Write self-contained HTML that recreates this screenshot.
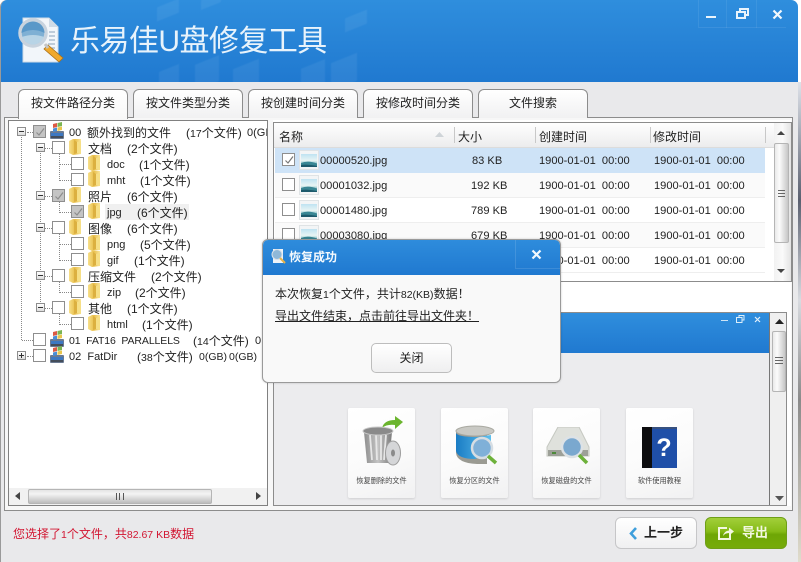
<!DOCTYPE html>
<html><head><meta charset="utf-8"><style>
html,body{margin:0;padding:0;width:801px;height:562px;overflow:hidden;background:#fff}
*{box-sizing:border-box}
body{font-family:"Liberation Sans","Noto Sans CJK SC",sans-serif;font-size:12px;color:#222;position:relative}
div,span,svg{position:absolute}
span{white-space:nowrap;line-height:16px}
i{font-style:normal;font-size:10.5px}
.t{font-size:11px}
#win{left:0;top:0;width:798px;height:562px;background:#e9e9eb;border-left:1px solid #9a9a9a;border-radius:7px 7px 0 0;overflow:hidden}
#edge{left:798px;top:0;width:3px;height:562px;background:linear-gradient(#fff 0,#fff 82px,#dfe3ea 82px,#5a6070 200px,#d8dbe0 300px,#8a8a8a 400px,#e0dccc 562px)}
#hd{left:0;top:0;width:798px;height:82px;background:linear-gradient(#2f8edd,#2079d0);overflow:hidden}
.sq{background:rgba(255,255,255,.06);transform:skewY(-22deg);filter:blur(.6px)}
#ctl{left:697px;top:0;width:88px;height:28px;border-left:1px solid rgba(255,255,255,.07);border-bottom:1px solid rgba(255,255,255,.08)}
.tab{top:89px;height:29px;width:110px;border:1px solid #8c8c8c;border-bottom:0;border-radius:6px 6px 0 0;background:linear-gradient(#fff,#f1f1f2);text-align:center;line-height:27px;color:#222}
#main{left:3px;top:117px;width:789px;height:394px;border:1px solid #8c8c8c;background:#f7f7f7}
#tree{left:8px;top:120px;width:260px;height:386px;border:1px solid #808080;background:#fff;overflow:hidden;z-index:1}
.r{left:0;width:268px;height:16px}
.r>span{top:1px}
.c{width:13px;height:13px;border:1px solid #8e8e8e;background:#fff;top:1px}
.c.k{background:#c4c4c4}
.e{width:9px;height:9px;border:1px solid #8d8d8d;background:linear-gradient(#fff,#ddd);top:3px}
.e:before{content:"";position:absolute;left:1px;top:3px;width:5px;height:1px;background:#333}
.e.p:after{content:"";position:absolute;left:3px;top:1px;width:1px;height:5px;background:#333}
.v{border-left:1px dotted #888;width:1px}
.h{border-top:1px dotted #888;height:1px}
#pane{left:273px;top:120px;width:518px;height:386px;background:#fff}
#list{left:273px;top:122px;width:519px;height:160px;border:1px solid #8c8c8c;background:#fff;overflow:hidden}
#lh{left:0;top:0;width:500px;height:25px;background:linear-gradient(#fff,#ececed);border-bottom:1px solid #dcdcdc}
.lr{left:1px;width:490px;height:25px;border-bottom:1px solid #eee;background:#fff}
.lr span{top:5px;font-size:11.1px}
.sb{background:linear-gradient(90deg,#f2f2f2,#fafafa,#e3e3e3)}
.th{background:linear-gradient(90deg,#e9e9e9,#fbfbfb 35%,#c6c6c6);border:1px solid #b5b5b5;border-radius:2px}
#pv{left:273px;top:312px;width:514px;height:194px;background:#ececee;border:1px solid #8c8c8c;overflow:hidden}
.card{top:95px;width:67px;height:90px;background:linear-gradient(160deg,#fff,#fbfbfb 55%,#f1f1f2);border-radius:2px;box-shadow:0 1px 2px rgba(0,0,0,.12)}
.card span{left:0;width:67px;text-align:center;top:65px;font-size:7.2px;color:#444}
#dlg{left:262px;top:239px;width:299px;height:144px;background:#f9f9f9;border:1px solid #9a9a9a;border-radius:6px;overflow:hidden;box-shadow:0 0 2px rgba(0,0,0,.2);z-index:5}
#dh{left:0;top:0;width:299px;height:35px;background:linear-gradient(#2e8cdc,#2079d0)}
#bt{left:108px;top:103px;width:81px;height:30px;border:1px solid #bdbdbd;border-radius:5px;background:linear-gradient(#fff,#efeff0);text-align:center;line-height:28px;font-size:12px}
#prev{left:615px;top:517px;width:82px;height:32px;border:1px solid #c6c6c8;border-radius:6px;background:linear-gradient(#fff,#f0f0f1)}
#exp{left:705px;top:517px;width:82px;height:32px;border:1px solid #6f9f18;border-radius:6px;background:linear-gradient(#a2cf3a,#86bb17 45%,#6ea605 55%,#76ab0a)}
</style></head><body>
<svg width="0" height="0" style="left:0;top:0"><defs>
<linearGradient id="fg" x1="0" x2="1" y1="0" y2="0"><stop offset="0" stop-color="#f7e08a"/><stop offset=".5" stop-color="#e9bf4d"/><stop offset="1" stop-color="#f9e69c"/></linearGradient>
<symbol id="fo" viewBox="0 0 14 18"><path d="M1 3 L5 1 L13 1 L13 16 L5 17 L1 15Z" fill="url(#fg)"/><path d="M6 2 L6 16 L9 15 L9 4Z" fill="#dcb040"/><path d="M9 4 L13 3 L13 16 L9 15Z" fill="#f6df86"/></symbol>
<symbol id="dr" viewBox="0 0 16 18"><rect x="1" y="9" width="14" height="8" rx="1" fill="#6a7a92"/><rect x="2" y="11" width="12" height="3" fill="#3d78c2"/><rect x="2" y="14" width="12" height="2" fill="#444d5a"/><path d="M4 2 L8 1 L8 5 L4 6Z" fill="#dc5a44"/><path d="M8.500 1 L13 0 L13 4 L8.500 5Z" fill="#7bb552"/><path d="M4 6.500 L8 5.500 L8 9 L4 10Z" fill="#4a8ed8"/><path d="M8.500 5.500 L13 4.500 L13 8 L8.500 9Z" fill="#eac64c"/></symbol>
<linearGradient id="sk" x1="0" x2="0" y1="0" y2="1"><stop offset="0" stop-color="#bfe3f2"/><stop offset=".5" stop-color="#e8f5f4"/><stop offset="1" stop-color="#2b8c9c"/></linearGradient>
<symbol id="tb" viewBox="0 0 20 20"><rect x=".5" y=".5" width="19" height="19" fill="#f3f5f6" stroke="#dfe3e5"/><rect x="2" y="4" width="16" height="13" fill="url(#sk)"/><path d="M2 13 Q9 10 18 13.500 L18 17 L2 17Z" fill="#3a8794"/><path d="M2 15 Q8 14 18 16 L18 17 L2 17Z" fill="#1d5a6c"/></symbol>
<linearGradient id="bl" x1="0" x2="1" y1="0" y2="0"><stop offset="0" stop-color="#1a7cc4"/><stop offset="1" stop-color="#5cc0ee"/></linearGradient>
<linearGradient id="gy" x1="0" x2="1" y1="0" y2="0"><stop offset="0" stop-color="#8e8e8e"/><stop offset=".5" stop-color="#c4c4c4"/><stop offset="1" stop-color="#7c7c7c"/></linearGradient>
</defs></svg>
<div id="win">
<div id="hd">
<div class="sq" style="left:156px;top:3px;width:22px;height:14px"></div>
<div class="sq" style="left:200px;top:-4px;width:20px;height:10px"></div>
<div class="sq" style="left:344px;top:14px;width:22px;height:14px"></div>
<div class="sq" style="left:158px;top:68px;width:20px;height:20px"></div>
<div class="sq" style="left:194px;top:60px;width:24px;height:26px"></div>
<div class="sq" style="left:232px;top:64px;width:26px;height:24px"></div>
<div class="sq" style="left:300px;top:64px;width:24px;height:24px"></div>
<div class="sq" style="left:330px;top:58px;width:26px;height:28px"></div>
<svg style="left:15px;top:16px" width="50" height="48" viewBox="0 0 50 48">
<path d="M7 2 L33 2 L42 11 L42 46 L7 46Z" fill="#f2f6fa" stroke="#cfdbe6"/>
<path d="M33 2 L33 11 L42 11Z" fill="#cfdbe6"/>
<g stroke="#9fb4c6" stroke-width="1.200"><path d="M33 16H39M33 20H39M33 24H39M32 28H39M34 32H39"/></g>
<circle cx="17" cy="17" r="13" fill="#7fb0d4" stroke="#c8d3de" stroke-width="3.500"/>
<path d="M5.500 17 A11.500 11.500 0 0 1 28.500 17 Q17 11 5.500 17Z" fill="#5a98c8"/>
<path d="M6 21 Q17 17 28 21 Q24 28.500 17 28.500 Q10 28.500 6 21Z" fill="#b8d4e6"/>
<path d="M32 29 L47 42 L43 46 L28 33Z" fill="#f0a92c" stroke="#a8701a" stroke-width=".8"/>
<path d="M29 28 L32 32" stroke="#c4c4c4" stroke-width="3"/>
</svg>
<span id="ttl" style="left:69px;top:26px;font-size:30px;line-height:32px;color:#e8f3fb;letter-spacing:-.55px">乐易佳U盘修复工具</span>
<div id="ctl"></div>
<div style="left:725px;top:0;width:1px;height:28px;background:rgba(255,255,255,.07)"></div>
<div style="left:755px;top:0;width:1px;height:28px;background:rgba(255,255,255,.07)"></div>
<div style="left:705px;top:16px;width:10px;height:2px;background:#eaf4fc"></div>
<svg style="left:735px;top:8px" width="13" height="11" viewBox="0 0 13 11"><path d="M4 3V1H12V7H9M1 4H9V10H1Z" fill="none" stroke="#eaf4fc" stroke-width="2"/></svg>
<svg style="left:771px;top:9px" width="11" height="11" viewBox="0 0 11 11"><path d="M1.500 1.500L9.500 9.500M9.500 1.500L1.500 9.500" stroke="#f2f8fd" stroke-width="2.200"/></svg>
</div>
<div id="main"></div>
<div class="tab" style="left:17px;background:linear-gradient(#fff,#f8f8f8);height:30px;z-index:2">按文件路径分类</div>
<div class="tab" style="left:132px">按文件类型分类</div>
<div class="tab" style="left:247px">按创建时间分类</div>
<div class="tab" style="left:362px">按修改时间分类</div>
<div class="tab" style="left:477px">文件搜索</div>
</div>

<div id="edge"></div>

<div id="tree">
<div class="v" style="left:12px;top:16px;height:203px"></div>
<div class="v" style="left:31px;top:32px;height:155px"></div>
<div class="h" style="left:18px;top:11px;width:6px"></div>
<div class="h" style="left:36px;top:27px;width:7px"></div>
<div class="h" style="left:36px;top:75px;width:7px"></div>
<div class="h" style="left:36px;top:107px;width:7px"></div>
<div class="h" style="left:36px;top:155px;width:7px"></div>
<div class="h" style="left:36px;top:187px;width:7px"></div>
<div class="v" style="left:50px;top:32px;height:28px"></div><div class="h" style="left:51px;top:43px;width:11px"></div><div class="h" style="left:51px;top:59px;width:11px"></div>
<div class="v" style="left:50px;top:80px;height:12px"></div><div class="h" style="left:51px;top:91px;width:11px"></div>
<div class="v" style="left:50px;top:112px;height:28px"></div><div class="h" style="left:51px;top:123px;width:11px"></div><div class="h" style="left:51px;top:139px;width:11px"></div>
<div class="v" style="left:50px;top:160px;height:12px"></div><div class="h" style="left:51px;top:171px;width:11px"></div>
<div class="v" style="left:50px;top:192px;height:12px"></div><div class="h" style="left:51px;top:203px;width:11px"></div>
<div class="h" style="left:13px;top:219px;width:11px"></div><div class="h" style="left:18px;top:235px;width:6px"></div>

<div class="r" style="top:3px"><div class="e" style="left:8px"></div><div class="c k" style="left:24px"><svg style="left:1px;top:1px" width="10" height="10" viewBox="0 0 10 10"><path d="M1.500 5.500L4 8L9 1.500" fill="none" stroke="#8d8d8d" stroke-width="1.200"/></svg></div><svg style="left:40px;top:-2px" width="16" height="18"><use href="#dr"/></svg><span class="t" style="left:60px">00</span><span style="left:78px">额外找到的文件</span><span style="left:177px">(<i>17</i>个文件)</span><span class="t" style="left:238px">0(GI</span></div>
<div class="r" style="top:19px"><div class="e" style="left:27px"></div><div class="c" style="left:43px"></div><svg style="left:59px;top:-2px" width="14" height="18"><use href="#fo"/></svg><span style="left:79px">文档</span><span style="left:118px">(2个文件)</span></div>
<div class="r" style="top:35px"><div class="c" style="left:62px"></div><svg style="left:78px;top:-2px" width="14" height="18"><use href="#fo"/></svg><span class="t" style="left:98px">doc</span><span style="left:130px">(1个文件)</span></div>
<div class="r" style="top:51px"><div class="c" style="left:62px"></div><svg style="left:78px;top:-2px" width="14" height="18"><use href="#fo"/></svg><span class="t" style="left:98px">mht</span><span style="left:131px">(1个文件)</span></div>
<div class="r" style="top:67px"><div class="e" style="left:27px"></div><div class="c k" style="left:43px"><svg style="left:1px;top:1px" width="10" height="10" viewBox="0 0 10 10"><path d="M1.500 5.500L4 8L9 1.500" fill="none" stroke="#8d8d8d" stroke-width="1.200"/></svg></div><svg style="left:59px;top:-2px" width="14" height="18"><use href="#fo"/></svg><span style="left:79px">照片</span><span style="left:118px">(6个文件)</span></div>
<div class="r" style="top:83px"><div style="left:96px;top:0;width:84px;height:16px;background:#f0f0f0"></div><div class="c k" style="left:62px"><svg style="left:1px;top:1px" width="10" height="10" viewBox="0 0 10 10"><path d="M1.500 5.500L4 8L9 1.500" fill="none" stroke="#8d8d8d" stroke-width="1.200"/></svg></div><svg style="left:78px;top:-2px" width="14" height="18"><use href="#fo"/></svg><span class="t" style="left:98px">jpg</span><span style="left:128px">(6个文件)</span></div>
<div class="r" style="top:99px"><div class="e" style="left:27px"></div><div class="c" style="left:43px"></div><svg style="left:59px;top:-2px" width="14" height="18"><use href="#fo"/></svg><span style="left:79px">图像</span><span style="left:118px">(6个文件)</span></div>
<div class="r" style="top:115px"><div class="c" style="left:62px"></div><svg style="left:78px;top:-2px" width="14" height="18"><use href="#fo"/></svg><span class="t" style="left:98px">png</span><span style="left:131px">(5个文件)</span></div>
<div class="r" style="top:131px"><div class="c" style="left:62px"></div><svg style="left:78px;top:-2px" width="14" height="18"><use href="#fo"/></svg><span class="t" style="left:98px">gif</span><span style="left:125px">(1个文件)</span></div>
<div class="r" style="top:147px"><div class="e" style="left:27px"></div><div class="c" style="left:43px"></div><svg style="left:59px;top:-2px" width="14" height="18"><use href="#fo"/></svg><span style="left:79px">压缩文件</span><span style="left:142px">(2个文件)</span></div>
<div class="r" style="top:163px"><div class="c" style="left:62px"></div><svg style="left:78px;top:-2px" width="14" height="18"><use href="#fo"/></svg><span class="t" style="left:98px">zip</span><span style="left:126px">(2个文件)</span></div>
<div class="r" style="top:179px"><div class="e" style="left:27px"></div><div class="c" style="left:43px"></div><svg style="left:59px;top:-2px" width="14" height="18"><use href="#fo"/></svg><span style="left:79px">其他</span><span style="left:118px">(1个文件)</span></div>
<div class="r" style="top:195px"><div class="c" style="left:62px"></div><svg style="left:78px;top:-2px" width="14" height="18"><use href="#fo"/></svg><span class="t" style="left:98px">html</span><span style="left:133px">(1个文件)</span></div>
<div class="r" style="top:211px"><div class="c" style="left:24px"></div><svg style="left:40px;top:-2px" width="16" height="18"><use href="#dr"/></svg><span style="left:60px;font-size:10.5px;letter-spacing:-.1px">01&nbsp; FAT16&nbsp; PARALLELS</span><span style="left:184px">(<i>14</i>个文件)</span><span class="t" style="left:246px">0</span></div>
<div class="r" style="top:227px"><div class="e p" style="left:8px"></div><div class="c" style="left:24px"></div><svg style="left:40px;top:-2px" width="16" height="18"><use href="#dr"/></svg><span class="t" style="left:60px">02&nbsp; FatDir</span><span style="left:128px">(<i>38</i>个文件)</span><span style="left:190px;font-size:10.5px">0(GB)</span><span style="left:220px;font-size:10.5px">0(GB)</span></div>
<div style="left:0;top:367px;width:259px;height:17px;background:#f1f1f1"></div>
<div class="th" style="left:19px;top:368px;width:184px;height:15px;background:linear-gradient(#e4e4e4,#f4f4f4 30%,#bcbcbc)"></div>
<div style="left:107px;top:372px;width:8px;height:7px;border-left:1px solid #555;border-right:1px solid #555"><div style="left:2px;top:0;width:1px;height:7px;background:#555"></div></div>
<svg style="left:6px;top:371px" width="6" height="9"><path d="M5 0V8L0 4Z" fill="#444"/></svg>
<svg style="left:247px;top:371px" width="6" height="9"><path d="M0 0V8L5 4Z" fill="#444"/></svg>
</div>

<div id="pane"></div>
<div id="list">
<div id="lh">
<span style="left:5px;top:6px">名称</span><svg style="left:161px;top:9px" width="9" height="5"><path d="M0 5L4.500 0L9 5Z" fill="#cfd4d8"/></svg>
<span style="left:184px;top:6px">大小</span>
<span style="left:265px;top:6px">创建时间</span>
<span style="left:379px;top:6px">修改时间</span>
<div style="left:180px;top:4px;width:1px;height:16px;background:#c8c8c8"></div>
<div style="left:261px;top:4px;width:1px;height:16px;background:#c8c8c8"></div>
<div style="left:376px;top:4px;width:1px;height:16px;background:#c8c8c8"></div>
<div style="left:491px;top:4px;width:1px;height:16px;background:#c8c8c8"></div>
</div>
<div class="lr" style="top:25px;background:#cee3f7;border-bottom:1px solid #cee3f7"><div class="c" style="left:7px;top:5px"><svg style="left:1px;top:1px" width="10" height="10" viewBox="0 0 10 10"><path d="M1.500 5.500L4 8L9 1.500" fill="none" stroke="#777" stroke-width="1.200"/></svg></div><svg style="left:24px;top:2px" width="20" height="20"><use href="#tb"/></svg><span style="left:45px">00000520.jpg</span><span style="left:197px">83 KB</span><span style="left:264px">1900-01-01&nbsp; 00:00</span><span style="left:379px">1900-01-01&nbsp; 00:00</span></div>
<div class="lr" style="top:50px;background:#fafafa"><div class="c" style="left:7px;top:5px"></div><svg style="left:24px;top:2px" width="20" height="20"><use href="#tb"/></svg><span style="left:45px">00001032.jpg</span><span style="left:196px">192 KB</span><span style="left:264px">1900-01-01&nbsp; 00:00</span><span style="left:379px">1900-01-01&nbsp; 00:00</span></div>
<div class="lr" style="top:75px"><div class="c" style="left:7px;top:5px"></div><svg style="left:24px;top:2px" width="20" height="20"><use href="#tb"/></svg><span style="left:45px">00001480.jpg</span><span style="left:196px">789 KB</span><span style="left:264px">1900-01-01&nbsp; 00:00</span><span style="left:379px">1900-01-01&nbsp; 00:00</span></div>
<div class="lr" style="top:100px;background:#fafafa"><div class="c" style="left:7px;top:5px"></div><svg style="left:24px;top:2px" width="20" height="20"><use href="#tb"/></svg><span style="left:45px">00003080.jpg</span><span style="left:196px">679 KB</span><span style="left:264px">1900-01-01&nbsp; 00:00</span><span style="left:379px">1900-01-01&nbsp; 00:00</span></div>
<div class="lr" style="top:125px"><span style="left:264px">1900-01-01&nbsp; 00:00</span><span style="left:379px">1900-01-01&nbsp; 00:00</span></div>
<div class="sb" style="left:500px;top:0;width:17px;height:158px"></div>
<div class="th" style="left:500px;top:20px;width:15px;height:100px"></div>
<div style="left:504px;top:67px;width:7px;height:7px;border-top:1px solid #666;border-bottom:1px solid #666"><div style="left:0;top:2px;width:7px;height:1px;background:#666"></div></div>
<svg style="left:503px;top:8px" width="8" height="5"><path d="M0 4L4 0L8 4Z" fill="#444"/></svg>
<svg style="left:503px;top:146px" width="8" height="5"><path d="M0 0L4 4L8 0Z" fill="#444"/></svg>
</div>

<div id="pv">
<div style="left:0;top:0;width:495px;height:40px;background:linear-gradient(#2f8edd,#2079d0)"></div>
<div style="left:447px;top:7px;width:7px;height:1px;background:#cde4f6"></div>
<svg style="left:462px;top:2px" width="9" height="8" viewBox="0 0 9 8"><path d="M3 2V.5H8V5H6M.5 2.500H6V7.500H.5Z" fill="none" stroke="#dceefa"/></svg>
<svg style="left:480px;top:3px" width="7" height="7"><path d="M1 1L6 6M6 1L1 6" stroke="#e4f1fb" stroke-width="1.200"/></svg>
<div style="left:495px;top:0;width:1px;height:192px;background:#777"></div>
<div class="sb" style="left:496px;top:0;width:17px;height:192px;background:#efefef"></div>
<div class="th" style="left:498px;top:18px;width:14px;height:61px"></div>
<div style="left:501px;top:44px;width:8px;height:7px;border-top:1px solid #666;border-bottom:1px solid #666"><div style="left:0;top:2px;width:8px;height:1px;background:#666"></div></div>
<svg style="left:501px;top:6px" width="9" height="5"><path d="M0 5L4.500 0L9 5Z" fill="#222"/></svg>
<svg style="left:501px;top:183px" width="9" height="5"><path d="M0 0L4.500 5L9 0Z" fill="#555"/></svg>

<div class="card" style="left:74px">
<svg style="left:10px;top:7px" width="50" height="52" viewBox="0 0 50 52">
<path d="M24 13 Q26 5 37 5 L37 1 L45 7 L37 14 L37 10 Q29 9 24 13Z" fill="#6bb52e"/>
<path d="M6 17 L34 17 L31 48 L9 48Z" fill="url(#gy)"/>
<path d="M12 20L14 45M18 20L19 45M23 20L23 45M28 20L26 45" stroke="#e6e6e6" stroke-width="1.800"/>
<ellipse cx="20" cy="16" rx="15" ry="4" fill="#8a8a8a" stroke="#c9c9c9"/>
<ellipse cx="35" cy="38" rx="7.500" ry="12" fill="#d5d6d8" stroke="#9d9d9d"/>
<ellipse cx="35" cy="38" rx="2" ry="3.500" fill="#8b8b8b"/>
</svg><span>恢复删除的文件</span></div>
<div class="card" style="left:167px">
<svg style="left:14px;top:17px" width="44" height="42" viewBox="0 0 44 42">
<path d="M1 6 L1 28 Q2 38 22 39 L32 39 L32 6Z" fill="#9a9a92"/>
<path d="M1 8 Q3 12 22 12 L36 10 L36 28 L20 34 Q3 34 1 26Z" fill="url(#bl)"/>
<ellipse cx="20" cy="6" rx="19" ry="5" fill="#c9c9c4" stroke="#a9a9a1"/>
<circle cx="27" cy="23" r="10" fill="#7fb0d8" stroke="#d6dde3" stroke-width="2.500"/>
<path d="M33 31L41 38" stroke="#6db13a" stroke-width="3.500"/>
</svg><span>恢复分区的文件</span></div>
<div class="card" style="left:259px">
<svg style="left:13px;top:19px" width="44" height="38" viewBox="0 0 44 38">
<path d="M12 0 L33 0 L43 20 L43 29 L1 29 L1 20Z" fill="#dfe1dc" stroke="#c5c8c1"/>
<rect x="2" y="23" width="40" height="6" fill="#9da098"/><rect x="6" y="25" width="4" height="2" fill="#4d8a3a"/>
<circle cx="26" cy="20" r="10" fill="#7aa8cf" stroke="#dde2e6" stroke-width="2.500"/>
<path d="M33 28L41 36" stroke="#6db13a" stroke-width="3.500"/>
</svg><span>恢复磁盘的文件</span></div>
<div class="card" style="left:352px">
<svg style="left:16px;top:19px" width="35" height="42" viewBox="0 0 35 42">
<rect x="0" y="0" width="35" height="41" fill="#1f4fa8"/>
<rect x="0" y="0" width="10" height="41" fill="#0d0d0f"/>
<rect x="10" y="0" width="25" height="2" fill="#36507f"/>
<text x="22" y="29" font-family="Liberation Sans" font-size="25" font-weight="bold" fill="#fff" text-anchor="middle">?</text>
</svg><span>软件使用教程</span></div>
</div>

<span style="left:13px;top:526px;color:#d21632;font-size:12px">您选择了<i>1</i>个文件，共<i>82.67 KB</i>数据</span>
<div id="prev"><svg style="left:13px;top:9px" width="9" height="13" viewBox="0 0 9 13"><path d="M7 1L2 6.500L7 12" fill="none" stroke="#3f9fdc" stroke-width="2.600"/></svg><span style="left:28px;top:7px;font-size:13px;font-weight:bold;color:#222">上一步</span></div>
<div id="exp"><svg style="left:11px;top:7px" width="18" height="16" viewBox="0 0 18 16"><path d="M10 3H2V14H13V9" fill="none" stroke="#f3f8e2" stroke-width="2"/><path d="M6 11Q7 6 12 5.500V2.500L17 6.500L12 10.500V8Q8 8 6 11Z" fill="#f3f8e2"/></svg><span style="left:36px;top:7px;font-size:13px;font-weight:bold;color:#f3f8e2">导出</span></div>

<div id="dlg">
<div id="dh"></div>
<div style="left:252px;top:0;width:1px;height:28px;background:rgba(255,255,255,.12)"></div>
<div style="left:252px;top:28px;width:47px;height:1px;background:rgba(255,255,255,.12)"></div>
<svg style="left:7px;top:8px" width="16" height="16" viewBox="0 0 16 16"><rect x="3" y="1" width="10" height="14" fill="#eef3f8"/><circle cx="7" cy="6.500" r="5" fill="#8fb8d8" stroke="#d8e0e8"/><path d="M10 10L15 15" stroke="#e9b44a" stroke-width="2"/></svg>
<span style="left:26px;top:9px;color:#f4f9fd;font-weight:bold;font-size:12px">恢复成功</span>
<svg style="left:268px;top:9px" width="11" height="11" viewBox="0 0 11 11"><path d="M1.500 1.500L9.500 9.500M9.500 1.500L1.500 9.500" stroke="#f2f8fd" stroke-width="2.200"/></svg>
<span style="left:12px;top:46px;color:#222">本次恢复<i>1</i>个文件，共计<i>82(KB)</i>数据！</span>
<span style="left:12px;top:68px;color:#222;text-decoration:underline">导出文件结束，点击前往导出文件夹！</span>
<div id="bt">关闭</div>
</div>
</body></html>
